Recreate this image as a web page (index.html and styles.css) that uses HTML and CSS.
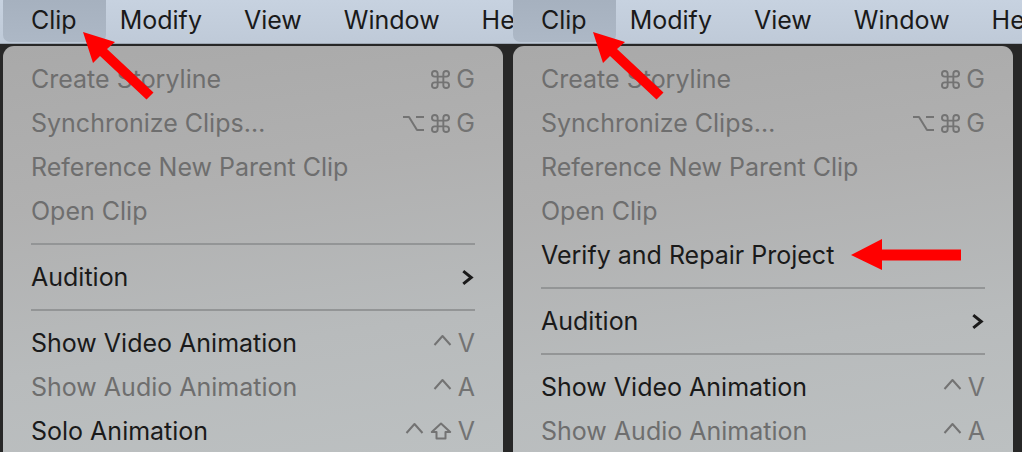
FILE: index.html
```html
<!DOCTYPE html>
<html lang="en">
<head>
    <meta charset="UTF-8">
    <title>Clip menu - Verify and Repair Project</title>
    <link rel="stylesheet" href="styles.css">
</head>
<body>
    <div class="screen">
        <!-- Before: Clip menu without the repair item -->
        <section class="panel">
            <div class="frame">
                <nav class="menubar">
                    <span class="menubar-item is-open">Clip</span>
                    <span class="menubar-item">Modify</span>
                    <span class="menubar-item">View</span>
                    <span class="menubar-item">Window</span>
                    <span class="menubar-item">Help</span>
                </nav>
                <div class="desk">
                    <ul class="menu">
                        <li class="menu-row is-disabled">
                            <span class="label">Create Storyline</span>
                            <span class="keys">
                                <svg class="key-cmd" viewBox="2 2 20 20"><path d="M9 6a3 3 0 1 0-3 3h12a3 3 0 1 0-3-3v12a3 3 0 1 0 3-3H6a3 3 0 1 0 3 3z"/></svg>
                                <span>G</span>
                            </span>
                        </li>
                        <li class="menu-row is-disabled">
                            <span class="label">Synchronize Clips…</span>
                            <span class="keys">
                                <svg class="key-opt" viewBox="0 0 23 17"><path d="M1 2h6l8 13h7M14 2h8"/></svg>
                                <svg class="key-cmd" viewBox="2 2 20 20"><path d="M9 6a3 3 0 1 0-3 3h12a3 3 0 1 0-3-3v12a3 3 0 1 0 3-3H6a3 3 0 1 0 3 3z"/></svg>
                                <span>G</span>
                            </span>
                        </li>
                        <li class="menu-row is-disabled"><span class="label">Reference New Parent Clip</span></li>
                        <li class="menu-row is-disabled"><span class="label">Open Clip</span></li>
                        <li class="menu-sep"></li>
                        <li class="menu-row">
                            <span class="label">Audition</span>
                            <svg class="submenu" viewBox="0 0 13 16"><path d="M3 2l7.5 6L3 14"/></svg>
                        </li>
                        <li class="menu-sep"></li>
                        <li class="menu-row">
                            <span class="label">Show Video Animation</span>
                            <span class="keys">
                                <svg class="key-ctrl" viewBox="0 0 19 12"><path d="M1.5 11L9.5 2l8 9"/></svg>
                                <span>V</span>
                            </span>
                        </li>
                        <li class="menu-row is-disabled">
                            <span class="label">Show Audio Animation</span>
                            <span class="keys">
                                <svg class="key-ctrl" viewBox="0 0 19 12"><path d="M1.5 11L9.5 2l8 9"/></svg>
                                <span>A</span>
                            </span>
                        </li>
                        <li class="menu-row">
                            <span class="label">Solo Animation</span>
                            <span class="keys">
                                <svg class="key-ctrl" viewBox="0 0 19 12"><path d="M1.5 11L9.5 2l8 9"/></svg>
                                <svg class="key-shift" viewBox="0 0 22 18"><path d="M11 1.5L1.8 10h4.7v6.5h9V10h4.7z"/></svg>
                                <span>V</span>
                            </span>
                        </li>
                    </ul>
                </div>
            </div>
        </section>

        <!-- After: the repair item shows up under Open Clip -->
        <section class="panel panel--after">
            <div class="frame">
                <nav class="menubar">
                    <span class="menubar-item is-open">Clip</span>
                    <span class="menubar-item">Modify</span>
                    <span class="menubar-item">View</span>
                    <span class="menubar-item">Window</span>
                    <span class="menubar-item">Help</span>
                </nav>
                <div class="desk">
                    <ul class="menu">
                        <li class="menu-row is-disabled">
                            <span class="label">Create Storyline</span>
                            <span class="keys">
                                <svg class="key-cmd" viewBox="2 2 20 20"><path d="M9 6a3 3 0 1 0-3 3h12a3 3 0 1 0-3-3v12a3 3 0 1 0 3-3H6a3 3 0 1 0 3 3z"/></svg>
                                <span>G</span>
                            </span>
                        </li>
                        <li class="menu-row is-disabled">
                            <span class="label">Synchronize Clips…</span>
                            <span class="keys">
                                <svg class="key-opt" viewBox="0 0 23 17"><path d="M1 2h6l8 13h7M14 2h8"/></svg>
                                <svg class="key-cmd" viewBox="2 2 20 20"><path d="M9 6a3 3 0 1 0-3 3h12a3 3 0 1 0-3-3v12a3 3 0 1 0 3-3H6a3 3 0 1 0 3 3z"/></svg>
                                <span>G</span>
                            </span>
                        </li>
                        <li class="menu-row is-disabled"><span class="label">Reference New Parent Clip</span></li>
                        <li class="menu-row is-disabled"><span class="label">Open Clip</span></li>
                        <li class="menu-row"><span class="label">Verify and Repair Project</span></li>
                        <li class="menu-sep"></li>
                        <li class="menu-row">
                            <span class="label">Audition</span>
                            <svg class="submenu" viewBox="0 0 13 16"><path d="M3 2l7.5 6L3 14"/></svg>
                        </li>
                        <li class="menu-sep"></li>
                        <li class="menu-row">
                            <span class="label">Show Video Animation</span>
                            <span class="keys">
                                <svg class="key-ctrl" viewBox="0 0 19 12"><path d="M1.5 11L9.5 2l8 9"/></svg>
                                <span>V</span>
                            </span>
                        </li>
                        <li class="menu-row is-disabled">
                            <span class="label">Show Audio Animation</span>
                            <span class="keys">
                                <svg class="key-ctrl" viewBox="0 0 19 12"><path d="M1.5 11L9.5 2l8 9"/></svg>
                                <span>A</span>
                            </span>
                        </li>
                    </ul>
                </div>
            </div>
        </section>

        <!-- Red markup arrows drawn over both shots -->
        <svg class="markup" viewBox="0 0 1022 452">
            <polygon points="83,32 115,42 107,49 153.5,92.5 146.5,99.5 100,56 93,63"/>
            <polygon points="593,32 625,42 617,49 663.5,92.5 656.5,99.5 610,56 603,63"/>
            <polygon points="851,255 882,239 882,249.5 961,249.5 961,260.5 882,260.5 882,270"/>
        </svg>
    </div>
</body>
</html>
```

FILE: styles.css
```css
:root {
    --desk-color: #272727;
    --text-color: #1a1a1a;
    --muted-color: #6e6e6e;
    --keys-color: #737373;
    --sep-color: #939596;
}

* {
    box-sizing: border-box;
}

body {
    margin: 0;
    font-family: 'Inter', 'Liberation Sans', sans-serif;
    background-color: var(--desk-color);
    color: var(--text-color);
}

.screen {
    position: relative;
    display: flex;
    width: 1022px;
    height: 452px;
    overflow: hidden;
}

.panel {
    width: 513px;
    height: 452px;
    overflow: hidden;
    flex-shrink: 0;
}

.panel--after {
    width: 509px;
}

.frame {
    width: 513px;
    height: 100%;
}

.panel--after .frame {
    margin-left: -3px;
}

/* Menu bar */
.menubar {
    display: flex;
    height: 44px;
    padding-left: 3px;
    background: linear-gradient(to bottom, #c7d2e0, #bfcad8);
    border-bottom: 1px solid #9ea8b4;
    font-size: 25px;
    white-space: nowrap;
    overflow: hidden;
}

.menubar-item {
    display: flex;
    align-items: center;
    height: 43px;
    padding: 0 21px 4px;
}

.menubar-item.is-open {
    height: 42px;
    padding: 0 29px 3px 28px;
    margin-right: -7px;
    background: linear-gradient(to bottom, #a6b1bf, #adb8c6);
    border-radius: 0 0 7px 7px;
}

/* Dropdown */
.desk {
    padding: 2px 0 0 3px;
    height: 408px;
}

.menu {
    list-style: none;
    margin: 0;
    padding: 11px 0 0;
    width: 500px;
    height: 100%;
    border-radius: 11px 11px 0 0;
    background: linear-gradient(172deg, #a9a9a9 0%, #b0b0b0 35%, #b8bbbc 70%, #bcc0c1 100%);
    font-size: 25px;
}

.menu-row {
    display: flex;
    justify-content: space-between;
    align-items: center;
    height: 44px;
    padding: 0 28px;
    white-space: nowrap;
}

.menu-row.is-disabled .label {
    color: var(--muted-color);
}

.menu-sep {
    height: 22px;
    padding: 10px 28px;
}

.menu-sep::before {
    content: "";
    display: block;
    height: 2px;
    background-color: var(--sep-color);
}

/* Shortcut glyphs */
.keys {
    display: flex;
    align-items: center;
    gap: 6px;
    color: var(--keys-color);
}

.keys svg {
    fill: none;
    stroke: currentColor;
    stroke-width: 2;
    stroke-linejoin: round;
}

.key-cmd {
    width: 19px;
    height: 19px;
    stroke-width: 1.9;
}

.key-opt {
    width: 23px;
    height: 17px;
}

.key-ctrl {
    width: 19px;
    height: 12px;
    margin-bottom: 7px;
}

.key-shift {
    width: 22px;
    height: 18px;
    stroke-width: 1.8;
}

.submenu {
    width: 14px;
    height: 17px;
    margin-right: 1px;
    fill: none;
    stroke: #1a1a1a;
    stroke-width: 2.8;
}

/* Markup overlay */
.markup {
    position: absolute;
    top: 0;
    left: 0;
    width: 1022px;
    height: 452px;
    fill: #ff0000;
    pointer-events: none;
}
```
